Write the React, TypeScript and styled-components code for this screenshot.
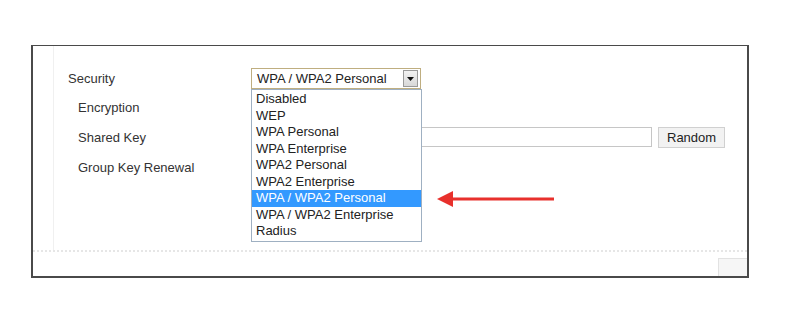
import React from 'react';
import styled, { createGlobalStyle } from 'styled-components';

const GlobalStyle = createGlobalStyle`
  html, body {
    margin: 0;
    padding: 0;
    background: #fff;
  }
  body {
    font-family: "Liberation Sans", Arial, sans-serif;
    font-size: 13px;
    color: #333;
  }
`;

const Page = styled.div`
  width: 800px;
  height: 333px;
  padding: 45px 0 0 31px;
  box-sizing: border-box;
`;

const Frame = styled.div`
  width: 718px;
  height: 233px;
  box-sizing: border-box;
  border: 2px solid #4a4a4a;
  border-top-width: 1px;
  display: flex;
  flex-direction: column;
`;

const Body = styled.div`
  height: 204px;
  margin-left: 20px;
  border-left: 1px solid #f0f0f0;
  padding: 18px 0 0 14px;
  box-sizing: border-box;
`;

const Footer = styled.div`
  flex: 1;
  border-top: 2px dotted #e6e6e6;
  display: flex;
  justify-content: flex-end;
  align-items: flex-end;
`;

const CornerBox = styled.div`
  width: 28px;
  height: 17px;
  background: #f6f6f6;
  border-top: 1px solid #e2e2e2;
  border-left: 1px solid #e2e2e2;
`;

const Form = styled.div`
  display: grid;
  grid-template-columns: 183px auto;
  grid-template-rows: 29px 29px 30px 30px;
  align-items: center;
`;

const Label = styled.div<{ $sub?: boolean }>`
  padding-left: ${p => (p.$sub ? '10px' : '0')};
  color: #333;
`;

const Field = styled.div`
  display: flex;
  align-items: center;
  gap: 6px;
  position: relative;
`;

const Select = styled.div`
  width: 170px;
  height: 21px;
  box-sizing: border-box;
  border: 1px solid #bfae80;
  background: #fff;
  display: flex;
  align-items: center;
  justify-content: space-between;
  padding: 0 2px 0 5px;
  color: #222;
`;

const ArrowBtn = styled.div`
  width: 15px;
  height: 17px;
  box-sizing: border-box;
  border: 1px solid #9a9a9a;
  background: linear-gradient(#f2f2f2, #d8d8d8);
  display: flex;
  align-items: center;
  justify-content: center;
`;

const List = styled.ul`
  position: absolute;
  top: 21px;
  left: 0;
  width: 171px;
  margin: 0;
  padding: 1px 0;
  list-style: none;
  background: #fff;
  border: 1px solid #9fb0c2;
  box-sizing: border-box;
  z-index: 2;
`;

const Option = styled.li<{ $active?: boolean }>`
  height: 16.5px;
  line-height: 16.5px;
  padding-left: 4px;
  color: ${p => (p.$active ? '#fff' : '#222')};
  background: ${p => (p.$active ? '#3399ff' : 'transparent')};
`;

const TextInput = styled.div`
  width: 401px;
  height: 20px;
  box-sizing: border-box;
  border: 1px solid #c6c6c6;
  background: #fff;
`;

const Button = styled.div`
  height: 21px;
  padding: 0 8px;
  box-sizing: border-box;
  border: 1px solid #d0d0d0;
  background: #f2f2f2;
  color: #222;
  display: flex;
  align-items: center;
`;

const Pointer = styled.svg`
  position: absolute;
  left: 186px;
  top: 122px;
  z-index: 3;
`;

const options = [
  'Disabled',
  'WEP',
  'WPA Personal',
  'WPA Enterprise',
  'WPA2 Personal',
  'WPA2 Enterprise',
  'WPA / WPA2 Personal',
  'WPA / WPA2 Enterprise',
  'Radius',
];

const App: React.FC = () => {
  const selected = 'WPA / WPA2 Personal';

  return (
    <>
      <GlobalStyle />
      <Page>
        <Frame>
          <Body>
            <Form>
              <Label>Security</Label>
              <Field>
                <Select>
                  <span>{selected}</span>
                  <ArrowBtn>
                    <svg width="7" height="4" viewBox="0 0 7 4">
                      <path d="M0 0 H7 L3.5 4 Z" fill="#111" />
                    </svg>
                  </ArrowBtn>
                </Select>
                <List>
                  {options.map(o => (
                    <Option key={o} $active={o === selected}>{o}</Option>
                  ))}
                </List>
                <Pointer width="120" height="18" viewBox="0 0 120 18">
                  <path d="M0 9 L16 1 L16 17 Z" fill="#e8302c" />
                  <rect x="14" y="7.5" width="103" height="3" fill="#e8302c" />
                </Pointer>
              </Field>

              <Label $sub>Encryption</Label>
              <div />

              <Label $sub>Shared Key</Label>
              <Field>
                <TextInput />
                <Button>Random</Button>
              </Field>

              <Label $sub>Group Key Renewal</Label>
              <div />
            </Form>
          </Body>
          <Footer>
            <CornerBox />
          </Footer>
        </Frame>
      </Page>
    </>
  );
};

export default App;
